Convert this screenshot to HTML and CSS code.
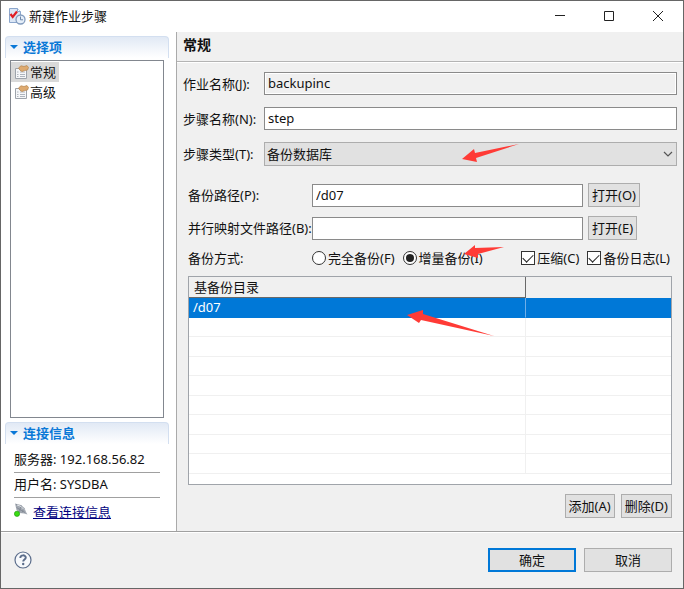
FILE: index.html
```html
<!DOCTYPE html>
<html lang="zh-CN">
<head>
  <meta charset="UTF-8">
  <title>新建作业步骤</title>
  <link rel="stylesheet" href="styles.css">
</head>
<body>
<div class="window">
  <header class="titlebar">
    <svg class="app-icon" width="18" height="18" viewBox="0 0 18 18">
      <path d="M1.5 1.5h8l3 3v11h-11z" fill="#dbe6f5" stroke="#8ba6cc"/>
      <path d="M9.5 1.5v3h3" fill="#fff" stroke="#8ba6cc"/>
      <path d="M2.5 7l2.2 3L9 4.500" fill="none" stroke="#e01f26" stroke-width="2.200"/>
      <circle cx="12.500" cy="12.500" r="4.500" fill="#e6effa" stroke="#829bbd" stroke-width="1.300"/>
      <path d="M12.500 9.500v3.300h2.500" fill="none" stroke="#6d86a8"/>
    </svg>
    <h1>新建作业步骤</h1>
    <div class="window-buttons">
      <button type="button" aria-label="最小化"><svg width="12" height="12" viewBox="0 0 12 12"><path d="M1 5.500h10" /></svg></button>
      <button type="button" aria-label="最大化"><svg width="12" height="12" viewBox="0 0 12 12"><path d="M1.500 1.500h9v9h-9z" /></svg></button>
      <button type="button" aria-label="关闭"><svg width="12" height="12" viewBox="0 0 12 12"><path d="M1 1l10 10M11 1L1 11" /></svg></button>
    </div>
  </header>

  <div class="content">
    <aside class="sidebar">
      <h2 class="section-title">选择项</h2>
      <ul class="tree">
        <li><a href="#general" class="active">
          <svg width="14" height="14" viewBox="0 0 14 14">
            <path d="M.5 3.500h11v10H.5z" fill="#f6f7f9" stroke="#9da3ab"/>
            <path d="M2 7h1.500M5 7h5M2 9.500h1.500M5 9.500h5M2 11.500h1.500M5 11.500h5" stroke="#aeb4bd"/>
            <path d="M3.500 3L6 .8l3 .7 3-.9 1.500 1.900-1 2.500-3 .5-2.500 1-2-1.300z" fill="#deaa70" stroke="#b98a55" stroke-width=".8"/>
          </svg>常规</a></li>
        <li><a href="#advanced">
          <svg width="14" height="14" viewBox="0 0 14 14">
            <path d="M.5 3.500h11v10H.5z" fill="#f6f7f9" stroke="#9da3ab"/>
            <path d="M2 7h1.500M5 7h5M2 9.500h1.500M5 9.500h5M2 11.500h1.500M5 11.500h5" stroke="#aeb4bd"/>
            <path d="M3.500 3L6 .8l3 .7 3-.9 1.500 1.900-1 2.500-3 .5-2.500 1-2-1.300z" fill="#deaa70" stroke="#b98a55" stroke-width=".8"/>
          </svg>高级</a></li>
      </ul>
      <h2 class="section-title">连接信息</h2>
      <div class="connection">
        <p>服务器: 192.168.56.82</p>
        <p>用户名: SYSDBA</p>
        <div class="connection-link">
          <svg width="14" height="14" viewBox="0 0 14 14">
            <path d="M1 .5l6 1.500 3.500 3 1.500 4 1.500 2.500-3.500-1-4.500-.5L2.500 7z" fill="#a4aab3"/>
            <path d="M2 1.500l7 3.500M2.500 4.500L11 9.500M7 2L5.500 9M10 5L8 9.500" stroke="#7d8591" stroke-width=".8"/>
            <path d="M3 2l4 1.500 3 3" fill="none" stroke="#e4e7eb"/>
            <circle cx="3" cy="10.800" r="2.600" fill="#3bdc12" stroke="#1f9c10" stroke-width=".7"/>
          </svg>
          <a href="#connection">查看连接信息</a>
        </div>
      </div>
    </aside>

    <main class="main">
      <h2 class="page-title">常规</h2>
      <form class="form">
        <div class="field">
          <label for="job">作业名称(J):</label>
          <input id="job" type="text" value="backupinc" readonly>
        </div>
        <div class="field">
          <label for="step">步骤名称(N):</label>
          <input id="step" type="text" value="step">
        </div>
        <div class="field">
          <label for="type">步骤类型(T):</label>
          <div class="select-box">
            <select id="type"><option>备份数据库</option></select>
            <svg width="10" height="6" viewBox="0 0 10 6"><path d="M1 1l4 4 4-4" fill="none" stroke="#555" stroke-width="1.200"/></svg>
          </div>
        </div>

        <div class="backup">
          <div class="path-row">
            <label for="path">备份路径(P):</label>
            <input id="path" type="text" value="/d07">
            <button type="button" class="btn">打开(O)</button>
          </div>
          <div class="path-row">
            <label for="map">并行映射文件路径(B):</label>
            <input id="map" type="text">
            <button type="button" class="btn">打开(E)</button>
          </div>
          <div class="mode-row">
            <span class="mode-label">备份方式:</span>
            <label><input type="radio" name="mode">完全备份(F)</label>
            <label><input type="radio" name="mode" checked>增量备份(I)</label>
            <div class="checks">
              <label><input type="checkbox" checked>压缩(C)</label>
              <label><input type="checkbox" checked>备份日志(L)</label>
            </div>
          </div>

          <div class="table-box">
            <table>
              <thead><tr><th>基备份目录</th><th></th></tr></thead>
              <tbody>
                <tr class="selected"><td>/d07</td><td></td></tr>
                <tr><td></td><td></td></tr>
                <tr><td></td><td></td></tr>
                <tr><td></td><td></td></tr>
                <tr><td></td><td></td></tr>
                <tr><td></td><td></td></tr>
                <tr><td></td><td></td></tr>
                <tr><td></td><td></td></tr>
                <tr><td></td><td></td></tr>
              </tbody>
            </table>
          </div>

          <div class="table-actions">
            <button type="button" class="btn">添加(A)</button>
            <button type="button" class="btn">删除(D)</button>
          </div>
        </div>
      </form>

      <svg class="arrows" width="340" height="320" viewBox="0 0 340 320">
        <path d="M285 127l12-10 1 4 44-9-43 14 1 4z"/>
        <path d="M287 222l11-9v3l29-1-26 7v4z"/>
        <path d="M230 283l16-5v4l71 22-73-16-2 3z"/>
      </svg>
    </main>
  </div>

  <footer class="footer">
    <button type="button" class="help" aria-label="帮助">
      <svg width="18" height="18" viewBox="0 0 18 18">
        <circle cx="9" cy="9" r="8" fill="#f7f9fc" stroke="#5b6d8b" stroke-width="1.200"/>
        <path d="M6.300 7c0-3.600 5.500-3.400 5.500-.4 0 2-2.600 2-2.600 4" fill="none" stroke="#5b6d8b" stroke-width="1.900"/>
        <circle cx="9.200" cy="13" r="1.200" fill="#5b6d8b"/>
      </svg>
    </button>
    <button type="button" class="btn wide default">确定</button>
    <button type="button" class="btn wide">取消</button>
  </footer>
</div>
</body>
</html>
```
FILE: styles.css
```css
* {
  box-sizing: border-box;
}

body {
  margin: 0;
  color: #111;
  background: #f0f0f0;
}

body, input, select, button {
  font-family: "Noto Sans", "Noto Sans CJK SC", sans-serif;
  font-size: 13px;
  line-height: 18px;
}

h1, h2, p, ul {
  margin: 0;
  padding: 0;
}

.window {
  display: flex;
  flex-direction: column;
  min-height: 100vh;
  border: 1px solid #666;
}

/* title bar */
.titlebar {
  display: flex;
  align-items: center;
  height: 31px;
  padding: 0 1px 1px 7px;
  background: #fff;
}

.titlebar h1 {
  margin-left: 3px;
  font-size: 13px;
  font-weight: normal;
}

.window-buttons {
  display: flex;
  margin-left: auto;
}

.window-buttons button {
  display: flex;
  align-items: center;
  justify-content: center;
  width: 49px;
  height: 30px;
  padding: 0;
  border: 0;
  background: none;
}

.window-buttons path {
  fill: none;
  stroke: #222;
}

.content {
  display: flex;
  flex: 1;
}

/* left side */
.sidebar {
  display: flex;
  flex-direction: column;
  width: 176px;
  padding: 4px 7px 10px 4px;
  background: #fff;
  border-right: 1px solid #aaa;
}

.section-title {
  display: flex;
  align-items: center;
  height: 22px;
  padding: 0 4px 2px;
  border: 1px solid #d3dff0;
  border-bottom: 0;
  border-radius: 4px 4px 0 0;
  background: linear-gradient(#e1e9f5, #fff);
  color: #0a78d7;
  font-size: 13px;
  font-weight: bold;
}

.section-title::before {
  content: "";
  margin-right: 5px;
  border: 4px solid transparent;
  border-top-color: #0a78d7;
  border-bottom: 0;
}

.tree {
  flex: 1;
  margin: 2px 5px 4px;
  padding: 1px 0;
  border: 1px solid #82878f;
  list-style: none;
}

.tree li {
  display: flex;
}

.tree a {
  display: flex;
  align-items: center;
  gap: 1px;
  height: 20px;
  padding: 0 3px 0 4px;
  color: #111;
  text-decoration: none;
}

.tree a.active {
  background: #d9d9d9;
}

.connection {
  margin: 4px 9px 0;
}

.connection p {
  height: 25px;
  padding-top: 2px;
  border-bottom: 1px solid #a0a0a0;
}

.connection-link {
  display: flex;
  gap: 5px;
  padding-top: 5px;
}

.connection-link a {
  color: #000080;
}

/* right side */
.main {
  position: relative;
  display: flex;
  flex: 1;
  flex-direction: column;
  min-width: 0;
}

.page-title {
  height: 30px;
  padding: 4px 6px;
  border-bottom: 1px solid #b4b4b4;
  box-shadow: 0 1px #fff;
  font-size: 14px;
  font-weight: bold;
}

.form {
  display: flex;
  flex: 1;
  flex-direction: column;
  gap: 12px;
  padding: 10px 6px 13px;
}

.field {
  display: grid;
  grid-template-columns: 81px 1fr;
  align-items: center;
}

label, .mode-label {
  white-space: nowrap;
}

input[type="text"] {
  width: 100%;
  min-width: 0;
  height: 23px;
  padding: 0 3px 1px;
  border: 1px solid #8a8a8a;
  border-radius: 0;
  background: #fff;
  color: #111;
}

input[readonly] {
  background: #f0f0f0;
  box-shadow: inset 0 0 0 1px #fff;
}

.select-box {
  display: grid;
  align-items: center;
}

.select-box > * {
  grid-area: 1 / 1;
}

.select-box svg {
  justify-self: end;
  margin-right: 4px;
  pointer-events: none;
}

select {
  width: 100%;
  height: 24px;
  padding: 0 2px;
  border: 1px solid #adadad;
  border-radius: 0;
  background: #e1e1e1;
  color: #111;
  appearance: none;
}

.backup {
  display: flex;
  flex: 1;
  flex-direction: column;
  gap: 9px;
  padding: 5px 5px 0;
}

.path-row {
  display: grid;
  grid-template-columns: 124px 1fr 89px;
  align-items: center;
}

.btn {
  height: 24px;
  padding: 0 3px;
  border: 1px solid #adadad;
  background: #e1e1e1;
  color: #111;
  white-space: nowrap;
}

.path-row .btn {
  justify-self: start;
  margin-left: 5px;
}

.mode-row {
  display: flex;
  align-items: center;
  gap: 8px;
  height: 18px;
}

.mode-label {
  width: 116px;
}

.mode-row label {
  display: flex;
  align-items: center;
  gap: 2px;
}

.mode-row input {
  display: grid;
  place-content: center;
  width: 14px;
  height: 14px;
  margin: 0;
  border: 1px solid #333;
  background: #fff;
  appearance: none;
}

.mode-row input[type="radio"] {
  border-radius: 50%;
}

.mode-row input[type="radio"]:checked::before {
  content: "";
  width: 8px;
  height: 8px;
  border-radius: 50%;
  background: #222;
}

.mode-row input[type="checkbox"]:checked::before {
  content: "";
  width: 9px;
  height: 5px;
  margin-bottom: 3px;
  border: solid #222;
  border-width: 0 0 1px 1px;
  transform: rotate(-45deg);
}

.checks {
  display: flex;
  gap: 8px;
  margin-right: 2px;
  margin-left: auto;
}

.table-box {
  flex: 1;
  border: 1px solid #a0a4aa;
  background: #fff;
}

table {
  width: 100%;
  height: 197px;
  table-layout: fixed;
  border-collapse: separate;
  border-spacing: 0;
}

th {
  height: 21px;
  padding: 0 5px;
  background: #f0f0f0;
  font-weight: normal;
  text-align: left;
}

th:first-child {
  width: 70%;
  border-right: 1px solid #696969;
  border-bottom: 1px solid #696969;
}

td {
  height: 19px;
  padding: 0 4px;
  border-bottom: 1px solid #f0f0f0;
  line-height: 16px;
}

td:first-child {
  border-right: 1px solid #f0f0f0;
}

.selected td {
  border-color: #0078d7;
  background: #0078d7;
  color: #fff;
}

.selected td:first-child {
  border-right-color: #6faee8;
}

.table-actions {
  display: flex;
  justify-content: flex-end;
  gap: 6px;
}

.arrows {
  position: absolute;
  top: 0;
  left: 0;
  overflow: visible;
  fill: #ff3b36;
  pointer-events: none;
}

/* bottom bar */
.footer {
  display: flex;
  align-items: center;
  gap: 8px;
  height: 57px;
  padding: 0 11px 0 13px;
  border-top: 1px solid #a0a0a0;
  box-shadow: inset 0 1px #fff;
}

.help {
  display: flex;
  margin-right: auto;
  padding: 0;
  border: 0;
  background: none;
}

.btn.wide {
  width: 88px;
}

.btn.default {
  border: 2px solid #0078d7;
}
```
